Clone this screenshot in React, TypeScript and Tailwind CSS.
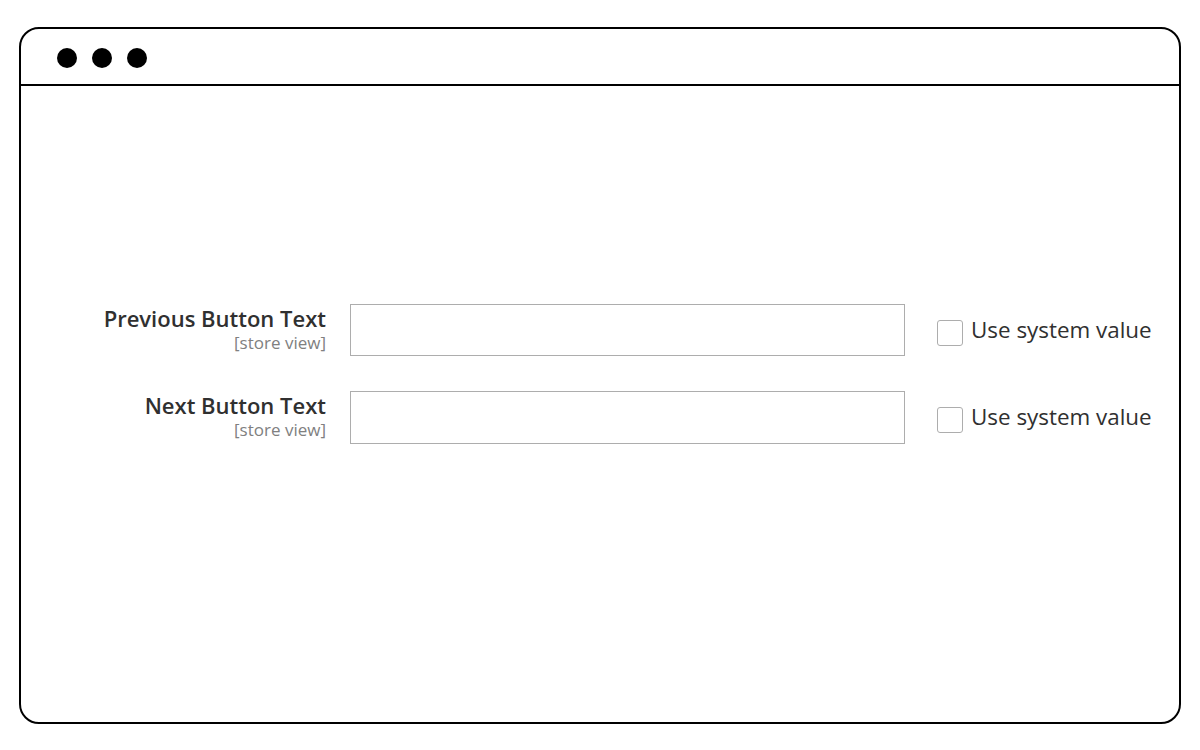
import React from "react";

const Row: React.FC<{ label: string; tall?: boolean }> = ({ label, tall }) => (
  <div className="flex items-start">
    <div className="w-[305px] shrink-0 text-right">
      <div className="text-[22px] leading-[28px] font-semibold text-[#303030]">{label}</div>
      <div className="mt-[1px] text-[17px] leading-[20px] text-[#808080]">[store view]</div>
    </div>
    <input
      type="text"
      className={`ml-[24px] w-[555px] border border-[#adadad] bg-white outline-none ${tall ? "h-[53px]" : "h-[52px]"}`}
    />
    <label className="ml-[32px] mt-[10px] flex items-center gap-[8px] text-[22.4px] leading-[30px] text-[#303030]">
      <span className="mt-[6px] w-[26px] h-[26px] rounded-[3px] border border-[#adadad] bg-white" />
      <span>Use system value</span>
    </label>
  </div>
);

export default function App() {
  return (
    <div
      className="w-[1200px] h-[750px] bg-white pt-[27px] pl-[19px]"
      style={{ fontFamily: '"Open Sans", "Liberation Sans", sans-serif' }}
    >
      <div className="w-[1162px] h-[697px] border-2 border-black rounded-[20px] flex flex-col">
        <div className="h-[57px] border-b-2 border-black flex items-center gap-[15px] pl-[36px] pt-[2px]">
          <span className="w-[20px] h-[20px] rounded-full bg-black" />
          <span className="w-[20px] h-[20px] rounded-full bg-black" />
          <span className="w-[20px] h-[20px] rounded-full bg-black" />
        </div>
        <div className="flex flex-col gap-[35px] pt-[218px]">
          <Row label="Previous Button Text" />
          <Row label="Next Button Text" tall />
        </div>
      </div>
    </div>
  );
}
